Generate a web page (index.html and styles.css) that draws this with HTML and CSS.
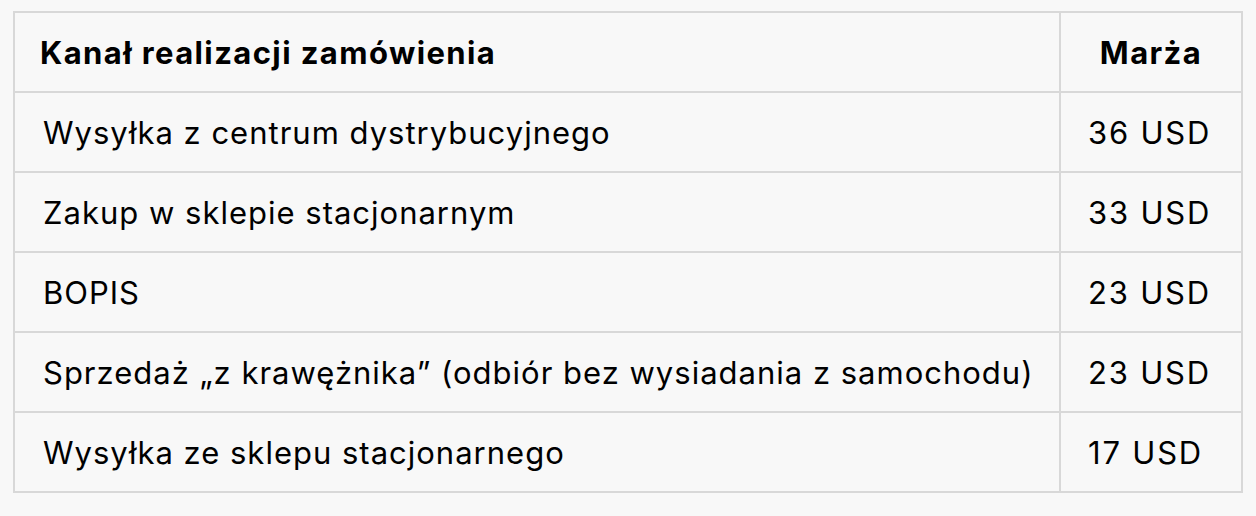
FILE: index.html
```html
<!DOCTYPE html>
<html lang="pl">
<head>
<meta charset="utf-8">
<title>Marża</title>
<link rel="stylesheet" href="styles.css">
</head>
<body>
<table class="margins">
  <colgroup><col class="col-channel"><col class="col-value"></colgroup>
  <thead>
    <tr><th class="channel">Kanał realizacji zamówienia</th><th class="value">Marża</th></tr>
  </thead>
  <tbody>
    <tr><td>Wysyłka z centrum dystrybucyjnego</td><td class="num">36 USD</td></tr>
    <tr><td>Zakup w sklepie stacjonarnym</td><td class="num">33 USD</td></tr>
    <tr><td>BOPIS</td><td class="num">23 USD</td></tr>
    <tr><td>Sprzedaż „z krawężnika” (odbiór bez wysiadania z samochodu)</td><td class="num">23 USD</td></tr>
    <tr><td>Wysyłka ze sklepu stacjonarnego</td><td class="num">17 USD</td></tr>
  </tbody>
</table>
</body>
</html>
```
FILE: styles.css
```css
html, body {
  margin: 0;
  background: #f8f8f8;
}
body {
  padding: 11px 0 0 13px;
  font-family: Inter, "Liberation Sans", sans-serif;
  color: #000;
}
.margins {
  border-collapse: collapse;
  table-layout: fixed;
  width: 1228px;
  font-size: 31px;
}
.col-channel {
  width: 1046px;
}
.col-value {
  width: 182px;
}
.margins th, .margins td {
  border: 2px solid #d8d8d8;
  height: 80px;
  padding: 0 28px;
  box-sizing: border-box;
  white-space: nowrap;
}
.margins th {
  font-weight: 700;
  letter-spacing: 1.4px;
}
.margins th.channel {
  text-align: left;
  padding-left: 25px;
}
.margins th.value {
  text-align: center;
  padding: 0;
}
.margins td {
  text-align: left;
  font-weight: 400;
  letter-spacing: 1px;
}
.margins td.num {
  padding-left: 27px;
  letter-spacing: 1.8px;
}
```
